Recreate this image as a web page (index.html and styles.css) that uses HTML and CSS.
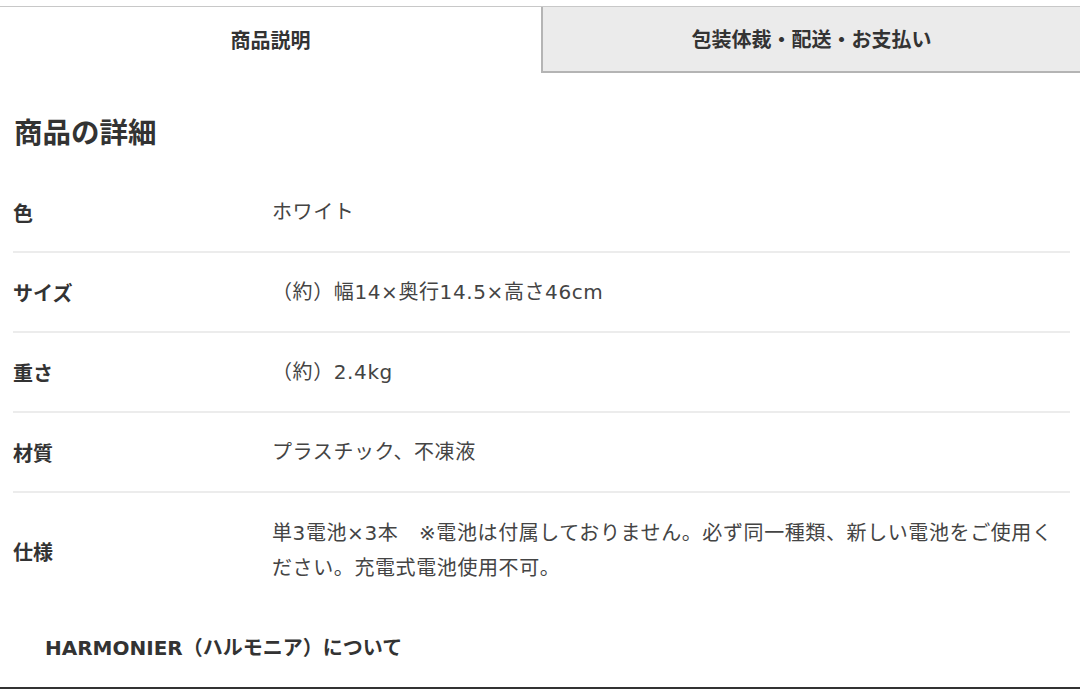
FILE: index.html
```html
<!DOCTYPE html>
<html lang="ja">
<head>
<meta charset="utf-8">
<title>商品の詳細</title>
<link rel="stylesheet" href="styles.css">
</head>
<body>
<div class="page">
  <div class="tabs">
    <div class="tab tab-active">商品説明</div>
    <div class="tab tab-inactive">包装体裁・配送・お支払い</div>
  </div>
  <h2 class="heading">商品の詳細</h2>
  <div class="specs">
    <div class="row">
      <div class="label">色</div>
      <div class="value">ホワイト</div>
    </div>
    <div class="row">
      <div class="label">サイズ</div>
      <div class="value">（約）幅14×奥行14.5×高さ46cm</div>
    </div>
    <div class="row">
      <div class="label">重さ</div>
      <div class="value">（約）2.4kg</div>
    </div>
    <div class="row">
      <div class="label">材質</div>
      <div class="value">プラスチック、不凍液</div>
    </div>
    <div class="row row-last">
      <div class="label">仕様</div>
      <div class="value">単3電池×3本　※電池は付属しておりません。必ず同一種類、新しい電池をご使用ください。充電式電池使用不可。</div>
    </div>
  </div>
  <div class="about">HARMONIER（ハルモニア）について</div>
</div>
</body>
</html>
```

FILE: styles.css
```css
* { box-sizing: border-box; }
html, body {
  margin: 0;
  padding: 0;
  background: #ffffff;
}
body {
  font-family: "DejaVu Sans", "Noto Sans CJK JP", sans-serif;
  color: #333;
  width: 1080px;
  height: 689px;
  overflow: hidden;
}
.page {
  padding-top: 6px;
  height: 689px;
  border-bottom: 2px solid #333;
  display: flex;
  flex-direction: column;
}
.tabs {
  display: flex;
  height: 67px;
  border-top: 1px solid #c8c8c8;
  font-family: "Noto Sans CJK JP", sans-serif;
}
.tab {
  flex: 1;
  display: flex;
  align-items: center;
  justify-content: center;
  font-size: 20px;
  font-weight: bold;
  color: #333;
  padding-bottom: 2px;
}
.tab-active {
  flex: 0 0 541px;
  background: #fff;
}
.tab-inactive {
  background: #ebebeb;
  border-left: 2px solid #b4b4b4;
  border-bottom: 2px solid #b4b4b4;
}
.heading {
  margin: 38px 0 22px 14px;
  font-size: 28.5px;
  line-height: 40px;
  font-weight: bold;
  color: #333;
  font-family: "Noto Sans CJK JP", sans-serif;
}
.specs {
  margin: 0 10px 0 13px;
}
.row {
  display: flex;
  align-items: center;
  padding: 22px 0 21px;
  border-bottom: 2px solid #ececec;
  min-height: 80px;
}
.row-last {
  border-bottom: none;
  padding-top: 23px;
}
.label {
  flex: 0 0 259px;
  font-size: 20px;
  font-weight: bold;
  color: #333;
  line-height: 35px;
  font-family: "Noto Sans CJK JP", sans-serif;
}
.value {
  flex: 1;
  font-size: 20px;
  line-height: 35px;
  color: #444;
  letter-spacing: 0.6px;
}
.about {
  margin: 21px 0 0 45px;
  font-size: 20px;
  font-weight: bold;
  line-height: 40px;
  color: #333;
}
```
